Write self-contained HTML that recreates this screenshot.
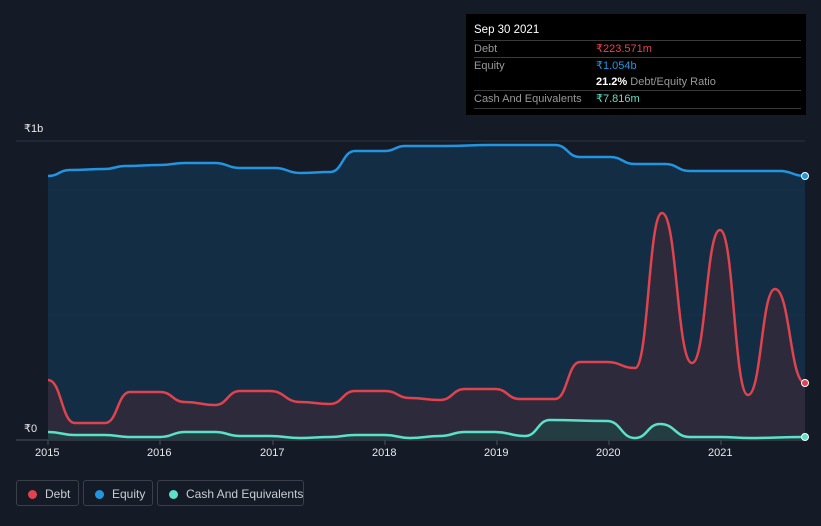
<!DOCTYPE html>
<html><head><style>
body{margin:0;width:821px;height:526px;background:#151b26;font-family:"Liberation Sans",sans-serif;overflow:hidden;position:relative}
.tt{position:absolute;left:466px;top:14px;width:340px;height:101px;background:#000;color:#fff;font-size:11px}
.tt .r{position:absolute;left:8px;right:5px;border-top:1px solid #3a3a3a;height:17px;line-height:17px;color:#999}
.tt .v{position:absolute;left:122px}
.lg{position:absolute;top:480px;height:26px;border:1px solid #3a3f4a;border-radius:3px;color:#c9ccd2;font-size:12px;line-height:26px;box-sizing:border-box;white-space:nowrap}
.lg i{position:absolute;left:11px;top:9px;width:9px;height:9px;border-radius:50%}
.ax{position:absolute;color:#e6e8ec;font-size:11px}
</style></head><body>
<svg width="821" height="526" style="position:absolute;left:0;top:0">
<line x1="16" y1="141" x2="805" y2="141" stroke="#2a3140"/>
<line x1="48" y1="190" x2="805" y2="190" stroke="#2a3545"/>
<line x1="48" y1="315" x2="805" y2="315" stroke="#2a3545"/>
<path id="ef" fill="#12304a" fill-opacity="0.85"/>
<path id="df" fill="#2d2b3b"/>
<path id="el" fill="none" stroke="#2394df" stroke-width="2.5"/>
<path id="dl" fill="none" stroke="#e0434d" stroke-width="2.5"/>
<path id="cf" fill="#1e4a4a" fill-opacity="0.6"/>
<path id="cl" fill="none" stroke="#5ce0c8" stroke-width="2.5"/>
<line x1="16" y1="440" x2="805" y2="440" stroke="#4a505c"/>
<g stroke="#4a505c"><line x1="48" y1="440" x2="48" y2="445"/><line x1="160" y1="440" x2="160" y2="445"/><line x1="273" y1="440" x2="273" y2="445"/><line x1="385" y1="440" x2="385" y2="445"/><line x1="497" y1="440" x2="497" y2="445"/><line x1="609" y1="440" x2="609" y2="445"/><line x1="721" y1="440" x2="721" y2="445"/></g>
<circle cx="805" cy="176" r="3.5" fill="#2394df" stroke="#fff" stroke-width="1"/>
<circle cx="805" cy="383" r="3.5" fill="#e0434d" stroke="#fff" stroke-width="1"/>
<circle cx="805" cy="437" r="3.5" fill="#5ce0c8" stroke="#fff" stroke-width="1"/>
</svg>
<script>
function sm(p){var d="M"+p[0][0]+","+p[0][1];for(var i=0;i<p.length-1;i++){var a=p[i],b=p[i+1],m=(a[0]+b[0])/2;d+=" C"+m+","+a[1]+" "+m+","+b[1]+" "+b[0]+","+b[1];}return d;}
function P(s){return s.split(" ").map(function(t){return t.split(",").map(Number);});}
var E=P("48,176 70,170 105,169 125,166 160,165 185,163 215,163 240,168 275,168 300,173 330,172 355,151 385,151 405,146 445,146 490,145 520,145 555,145 580,157 610,157 635,164 665,164 690,171 720,171 780,171 805,176");
var D=P("48,380 75,423 105,423 130,392 160,392 185,402 215,405 240,391 270,391 300,402 330,404 355,391 385,391 410,398 440,400 465,389 495,389 520,399 555,399 580,362 607,362 635,368 662,213 692,363 720,230 748,395 775,289 805,383");
var C=P("48,432 75,435 105,435 130,437 160,437 185,432 215,432 240,436 270,436 300,438 330,437 355,435 385,435 410,438 440,436 465,432 495,432 525,436 550,420 607,421 635,438 660,424 690,437 720,437 750,438 805,437");
function s(id,d){document.getElementById(id).setAttribute("d",d);}
s("el",sm(E));s("ef",sm(E)+" L805,439 L48,439Z");
s("dl",sm(D));s("df",sm(D)+" L805,439 L48,439Z");
s("cl",sm(C));s("cf",sm(C)+" L805,439 L48,439Z");
</script>
<div class="ax" style="left:24px;top:122px">₹1b</div>
<div class="ax" style="left:24px;top:422px">₹0</div>
<div class="ax" style="left:35px;top:447px">2015</div>
<div class="ax" style="left:147px;top:447px">2016</div>
<div class="ax" style="left:260px;top:447px">2017</div>
<div class="ax" style="left:372px;top:447px">2018</div>
<div class="ax" style="left:484px;top:447px">2019</div>
<div class="ax" style="left:596px;top:447px">2020</div>
<div class="ax" style="left:708px;top:447px">2021</div>
<div class="tt">
<div style="position:absolute;left:8px;top:10px;font-size:11.5px">Sep 30 2021</div>
<div class="r" style="top:26px">Debt<span class="v" style="color:#e8434d">₹223.571m</span></div>
<div class="r" style="top:43px">Equity<span class="v" style="color:#2394df">₹1.054b</span></div>
<div class="r" style="top:60px;border-top:none"><span class="v"><b style="color:#fff">21.2%</b> Debt/Equity Ratio</span></div>
<div class="r" style="top:76px;border-bottom:1px solid #3a3a3a">Cash And Equivalents<span class="v" style="color:#5ce0c8">₹7.816m</span></div>
</div>
<div class="lg" style="left:16px;width:63px"><i style="background:#e0434d"></i><span style="position:absolute;left:28px">Debt</span></div>
<div class="lg" style="left:83px;width:70px"><i style="background:#2394df"></i><span style="position:absolute;left:28px">Equity</span></div>
<div class="lg" style="left:157px;width:147px"><i style="background:#5ce0c8"></i><span style="position:absolute;left:28px">Cash And Equivalents</span></div>
</body></html>
